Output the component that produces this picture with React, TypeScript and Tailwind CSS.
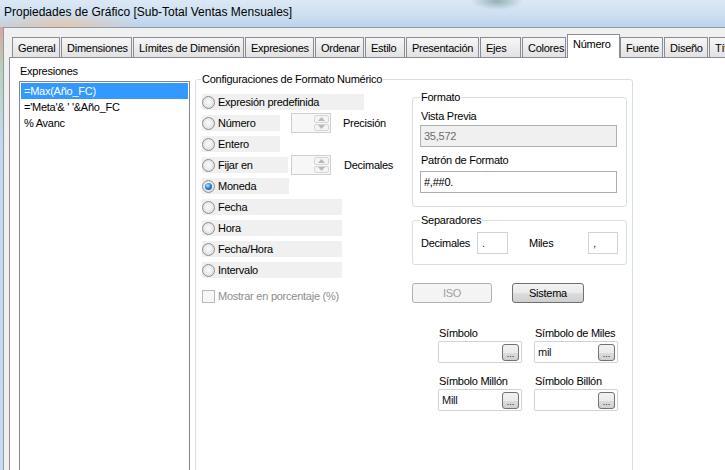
import React from "react";

const tabs: { label: string; cls: string; selected?: boolean }[] = [
  { label: "General", cls: "w-[48px] ml-[3px]" },
  { label: "Dimensiones", cls: "w-[71px] ml-[1px]" },
  { label: "Límites de Dimensión", cls: "w-[111px] ml-[1px]" },
  { label: "Expresiones", cls: "w-[69px] ml-[1px]" },
  { label: "Ordenar", cls: "w-[49px] ml-[1px]" },
  { label: "Estilo", cls: "w-[40px] ml-[1px]" },
  { label: "Presentación", cls: "w-[73px] ml-[1px]" },
  { label: "Ejes", cls: "w-[41px] ml-[1px]" },
  { label: "Colores", cls: "w-[44px] ml-[1px]" },
  { label: "Número", cls: "w-[53px] ml-[1px]", selected: true },
  { label: "Fuente", cls: "w-[43px] ml-0" },
  { label: "Diseño", cls: "w-[44px] ml-[1px]" },
  { label: "Título", cls: "w-[40px] ml-[1px]" },
];

function Radio({ checked }: { checked?: boolean }) {
  return (
    <span className="flex h-[13px] w-[13px] shrink-0 items-center justify-center rounded-full border border-[#8e8f8f] bg-[radial-gradient(circle_at_50%_45%,#fbfbfb_0%,#ececec_45%,#d4d4d4_100%)]">
      {checked && (
        <span className="h-[7px] w-[7px] rounded-full bg-[radial-gradient(circle_at_40%_35%,#b9e3ff_0%,#2b7ccc_50%,#0f4689_100%)]" />
      )}
    </span>
  );
}

function RadioRow({ label, cls, checked }: { label: string; cls: string; checked?: boolean }) {
  return (
    <div className={"flex h-[16px] shrink-0 items-center bg-[#f0f0f0] " + cls}>
      <Radio checked={checked} />
      <span className="ml-[3px] leading-[16px]">{label}</span>
    </div>
  );
}

function Tri({ up }: { up?: boolean }) {
  return (
    <svg width="7" height="4" viewBox="0 0 7 4">
      {up ? <path d="M0 4 L3.5 0 L7 4 Z" fill="#b8b8b8" /> : <path d="M0 0 L3.5 4 L7 0 Z" fill="#b8b8b8" />}
    </svg>
  );
}

function Spinner() {
  return (
    <div className="flex h-[20px] w-[40px] shrink-0 border border-[#cfcfcf] bg-[#f7f7f7]">
      <div className="flex-1" />
      <div className="flex w-[17px] flex-col gap-[1px] p-[1px]">
        <div className="flex flex-1 items-center justify-center rounded-[2px] border border-[#d6d6d6] bg-[#f4f4f4]">
          <Tri up />
        </div>
        <div className="flex flex-1 items-center justify-center rounded-[2px] border border-[#d6d6d6] bg-[#f4f4f4]">
          <Tri />
        </div>
      </div>
    </div>
  );
}

function DotsBtn() {
  return (
    <div className="absolute right-[2px] top-[2px] flex h-[17px] w-[17px] items-end justify-center rounded-[3px] border border-[#707070] bg-[linear-gradient(180deg,#f2f2f2_0%,#ebebeb_50%,#dddddd_51%,#cfcfcf_100%)] pb-[3px] text-[9px] leading-[6px] tracking-[0px] text-[#222]">
      ...
    </div>
  );
}

function SymField({ label, value, cls }: { label: string; value: string; cls: string }) {
  return (
    <div className={"flex flex-col " + cls}>
      <div className="h-[14px] pl-[1px] leading-[14px]">{label}</div>
      <div className="relative mt-[1px] flex h-[22px] items-center rounded-[2px] border border-[#cdd3da] bg-white pl-[3px] text-[#10102a]">
        {value}
        <DotsBtn />
      </div>
    </div>
  );
}

export default function App() {
  return (
    <div className="relative h-[470px] w-[725px] overflow-hidden bg-[#f0f0f0] font-['Liberation_Sans',Arial,sans-serif] text-[11px] tracking-[-0.25px] text-black">
      {/* Title bar */}
      <div className="h-[27px] bg-[radial-gradient(ellipse_80px_14px_at_60px_26px,rgba(236,196,160,0.8),transparent),radial-gradient(ellipse_26px_9px_at_497px_1px,rgba(60,110,100,0.45),transparent),linear-gradient(180deg,#dce8f5_0%,#cddff1_55%,#bcd3eb_100%)] pl-[4px] pt-[4px] text-[12px] leading-[16px] tracking-[0px]">
        Propiedades de Gráfico [Sub-Total Ventas Mensuales]
      </div>
      <div className="flex h-[443px]">
        <div className="w-[3px] shrink-0 bg-[linear-gradient(180deg,#d9a6a0_0%,#b7d2b8_10%,#c4d7ec_25%,#c8daee_100%)]" />
        <div className="flex min-w-0 flex-1 flex-col border-l border-t border-[#8d9aae] bg-[#f0f0f0] pl-[5px]">
          {/* Tabs */}
          <div className="flex h-[29px] shrink-0 items-end pt-[9px]">
            {tabs.map((t) =>
              t.selected ? (
                <div
                  key={t.label}
                  className={"relative z-10 mb-[-1px] h-[24px] shrink-0 border border-b-0 border-[#898c95] bg-white pl-[5px] pt-[2px] leading-[14px] " + t.cls}
                >
                  {t.label}
                </div>
              ) : (
                <div
                  key={t.label}
                  className={"h-[20px] shrink-0 overflow-hidden whitespace-nowrap border border-b-0 border-[#898c95] bg-[linear-gradient(180deg,#f6f6f6_0%,#ececec_50%,#e2e2e2_100%)] pl-[5px] pt-[3px] leading-[14px] " + t.cls}
                >
                  {t.label}
                </div>
              )
            )}
          </div>
          {/* Panel */}
          <div className="flex flex-1 border-l border-t border-[#898c95] bg-white pl-[9px] pt-[6px]">
            <div className="flex w-[171px] shrink-0 flex-col">
              <div className="h-[14px] pl-[1px] leading-[14px]">Expresiones</div>
              <div className="mt-[3px] h-[400px] border border-[#828790] p-[1px]">
                <div className="h-[16px] bg-[#3399ff] pl-[3px] leading-[16px] text-white">=Max(Año_FC)</div>
                <div className="h-[16px] pl-[3px] leading-[16px]">='Meta'&amp; ' '&amp;Año_FC</div>
                <div className="h-[16px] pl-[3px] leading-[16px]">% Avanc</div>
              </div>
            </div>
            {/* Group */}
            <div className="relative ml-[5px] mt-[15px] h-[400px] w-[438px] shrink-0 rounded-[3px] border border-[#d5dfe5]">
              <div className="absolute -top-[8px] left-[5px] bg-white px-[1px] leading-[14px]">
                Configuraciones de Formato Numérico
              </div>
              <div className="flex">
                <div className="flex w-[216px] shrink-0 flex-col gap-[5px] pl-[6px] pt-[14px]">
                  <RadioRow label="Expresión predefinida" cls="w-[162px]" />
                  <div className="flex h-[16px] items-center">
                    <RadioRow label="Número" cls="w-[78px]" />
                    <div className="ml-[11px]">
                      <Spinner />
                    </div>
                    <span className="ml-[12px]">Precisión</span>
                  </div>
                  <RadioRow label="Entero" cls="w-[78px]" />
                  <div className="flex h-[16px] items-center">
                    <RadioRow label="Fijar en" cls="w-[86px]" />
                    <div className="ml-[3px]">
                      <Spinner />
                    </div>
                    <span className="ml-[13px]">Decimales</span>
                  </div>
                  <RadioRow label="Moneda" cls="w-[87px]" checked />
                  <RadioRow label="Fecha" cls="w-[140px]" />
                  <RadioRow label="Hora" cls="w-[140px]" />
                  <RadioRow label="Fecha/Hora" cls="w-[140px]" />
                  <RadioRow label="Intervalo" cls="w-[140px]" />
                  <div className="mt-[6px] flex h-[14px] items-center text-[#8d8d8d]">
                    <span className="h-[13px] w-[13px] shrink-0 border border-[#b9b9b9] bg-[#f7f7f7]" />
                    <span className="ml-[3px]">Mostrar en porcentaje (%)</span>
                  </div>
                </div>
                <div className="flex w-[215px] shrink-0 flex-col pt-[17px]">
                  {/* Formato */}
                  <div className="relative rounded-[3px] border border-[#d5dfe5] pb-[13px] pl-[7px] pt-[11px]">
                    <div className="absolute -top-[8px] left-[7px] bg-white px-[1px] leading-[14px]">Formato</div>
                    <div className="h-[14px] pl-[1px] leading-[14px]">Vista Previa</div>
                    <div className="mt-[2px] flex h-[22px] w-[197px] items-center border border-[#adb2b5] bg-[#f0f0f0] pl-[3px] text-[#6d6d6d]">
                      35,572
                    </div>
                    <div className="mt-[6px] h-[14px] pl-[1px] leading-[14px]">Patrón de Formato</div>
                    <div className="mt-[4px] flex h-[22px] w-[197px] items-center border border-[#abadb3] bg-white pl-[3px]">
                      #,##0.
                    </div>
                  </div>
                  {/* Separadores */}
                  <div className="relative mt-[13px] rounded-[3px] border border-[#d5dfe5] pb-[10px] pl-[8px] pt-[11px]">
                    <div className="absolute -top-[8px] left-[7px] bg-white px-[1px] leading-[14px]">Separadores</div>
                    <div className="flex h-[22px] items-center">
                      <span className="w-[56px] shrink-0">Decimales</span>
                      <div className="flex h-[22px] w-[31px] shrink-0 items-center border border-[#cdd3da] pl-[4px] text-[#10102a]">.</div>
                      <span className="ml-[21px] w-[59px] shrink-0">Miles</span>
                      <div className="flex h-[22px] w-[30px] shrink-0 items-center border border-[#cdd3da] pl-[4px] text-[#2a1060]">,</div>
                    </div>
                  </div>
                  {/* Buttons */}
                  <div className="mt-[18px] flex">
                    <div className="flex h-[20px] w-[80px] items-center justify-center rounded-[3px] border border-[#adb2b5] bg-[#f4f4f4] text-[#a0a0a0]">
                      ISO
                    </div>
                    <div className="ml-[20px] flex h-[20px] w-[72px] items-center justify-center rounded-[3px] border border-[#707070] bg-[linear-gradient(180deg,#f2f2f2_0%,#ebebeb_50%,#dddddd_51%,#cfcfcf_100%)]">
                      Sistema
                    </div>
                  </div>
                  {/* Symbols */}
                  <div className="mt-[23px] grid grid-cols-[84px_84px] gap-x-[12px] pl-[26px]">
                    <SymField label="Símbolo" value="" cls="" />
                    <SymField label="Símbolo de Miles" value="mil" cls="" />
                    <SymField label="Símbolo Millón" value="Mill" cls="mt-[11px]" />
                    <SymField label="Símbolo Billón" value="" cls="mt-[11px]" />
                  </div>
                </div>
              </div>
            </div>
          </div>
        </div>
      </div>
    </div>
  );
}
